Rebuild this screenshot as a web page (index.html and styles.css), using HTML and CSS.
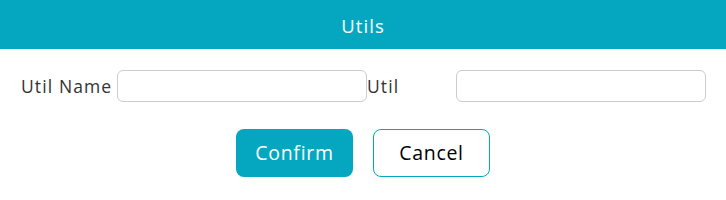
FILE: index.html
```html
<!DOCTYPE html>
<html lang="en">
<head>
    <meta charset="UTF-8">
    <meta name="viewport" content="width=device-width, initial-scale=1.0">
    <title>Utils</title>
    <link rel="stylesheet" href="styles.css">
</head>
<body>
    <div class="dialog">
        <div class="dialog-header">Utils</div>

        <!-- Util form -->
        <div class="form-row">
            <label class="label-name" for="util-name">Util Name</label>
            <input type="text" id="util-name">
            <label class="label-util" for="util-value">Util</label>
            <input type="text" id="util-value">
        </div>

        <div class="actions">
            <button class="btn confirm-btn">Confirm</button>
            <button class="btn cancel-btn">Cancel</button>
        </div>
    </div>
</body>
</html>
```

FILE: styles.css
```css
body {
    font-family: "Open Sans", "Noto Sans", sans-serif;
    background-color: white;
    margin: 0;
    padding: 0;
}
.dialog {
    width: 726px;
}
.dialog-header {
    background-color: #05a7c0;
    color: white;
    height: 49px;
    line-height: 52px;
    text-align: center;
    font-size: 18.5px;
    letter-spacing: 1.1px;
}
.form-row {
    display: flex;
    align-items: center;
    padding: 21px 20px 0 21px;
    height: 32px;
    color: #333;
    font-size: 17.5px;
    letter-spacing: 1.1px;
}
.label-name {
    width: 96px;
    white-space: nowrap;
}
.label-util {
    width: 89px;
}
.form-row input {
    width: 250px;
    height: 32px;
    box-sizing: border-box;
    border: 1px solid #ccc;
    border-radius: 6px;
    padding: 0 8px;
    margin: 0;
    font-size: 16px;
}
.actions {
    display: flex;
    justify-content: center;
    gap: 20px;
    margin-top: 27px;
}
.btn {
    width: 117px;
    height: 48px;
    border-radius: 8px;
    font-family: inherit;
    font-size: 19.5px;
    letter-spacing: 0.7px;
    padding: 0 0 2px;
    cursor: pointer;
}
.confirm-btn {
    background-color: #05a7c0;
    color: white;
    border: none;
}
.cancel-btn {
    background-color: white;
    color: black;
    border: 1px solid #05a7c0;
}
```
